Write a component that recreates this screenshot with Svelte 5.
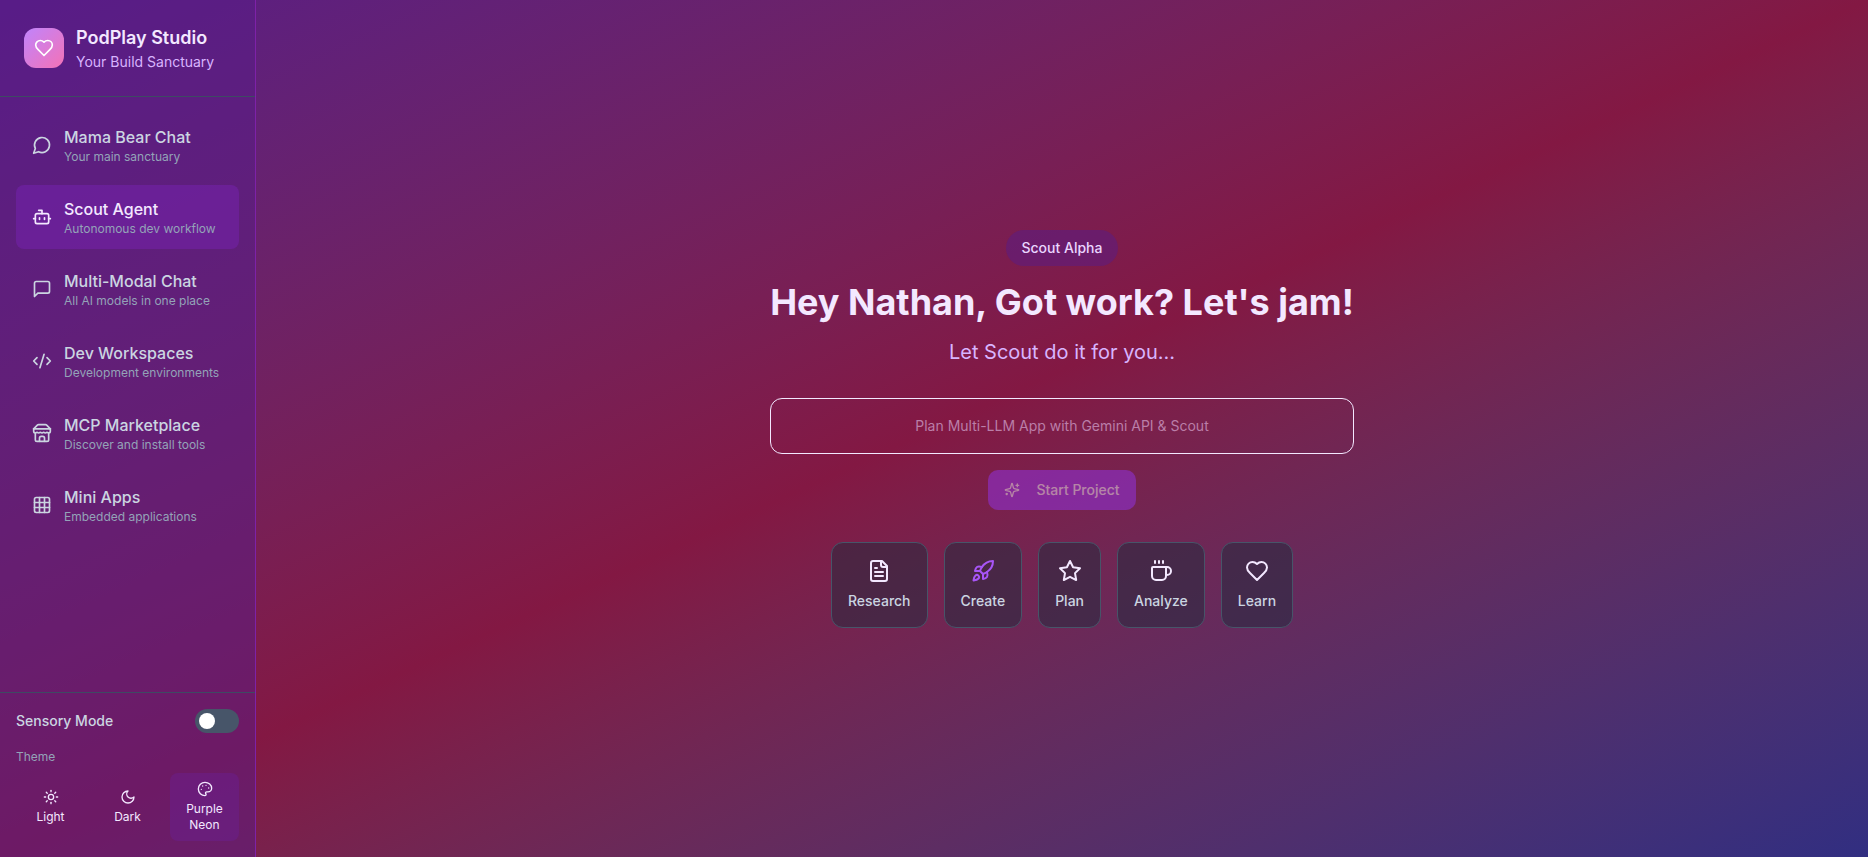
<script>
  const icons = {
    heart: ['M19 14c1.49-1.46 3-3.21 3-5.5A5.5 5.5 0 0 0 16.5 3c-1.76 0-3 .5-4.5 2-1.5-1.5-2.74-2-4.5-2A5.5 5.5 0 0 0 2 8.5c0 2.3 1.5 4.05 3 5.5l7 7Z'],
    chat: ['M7.9 20A9 9 0 1 0 4 16.1L2 22Z'],
    bot: ['M12 8V4H8', 'M6 8h12a2 2 0 0 1 2 2v8a2 2 0 0 1-2 2H6a2 2 0 0 1-2-2v-8a2 2 0 0 1 2-2z', 'M2 14h2', 'M20 14h2', 'M15 13v2', 'M9 13v2'],
    square: ['M21 15a2 2 0 0 1-2 2H7l-4 4V5a2 2 0 0 1 2-2h14a2 2 0 0 1 2 2z'],
    code: ['m18 16 4-4-4-4', 'm6 8-4 4 4 4', 'm14.5 4-5 16'],
    store: [
      'm2 7 4.41-4.41A2 2 0 0 1 7.83 2h8.34a2 2 0 0 1 1.42.59L22 7',
      'M4 12v8a2 2 0 0 0 2 2h12a2 2 0 0 0 2-2v-8',
      'M15 22v-4a2 2 0 0 0-2-2h-2a2 2 0 0 0-2 2v4',
      'M2 7h20',
      'M22 7v3a2 2 0 0 1-2 2a2.7 2.7 0 0 1-1.59-.63.7.7 0 0 0-.82 0A2.7 2.7 0 0 1 16 12a2.7 2.7 0 0 1-1.59-.63.7.7 0 0 0-.82 0A2.7 2.7 0 0 1 12 12a2.7 2.7 0 0 1-1.59-.63.7.7 0 0 0-.82 0A2.7 2.7 0 0 1 8 12a2.7 2.7 0 0 1-1.59-.63.7.7 0 0 0-.82 0A2.7 2.7 0 0 1 4 12a2 2 0 0 1-2-2V7'
    ],
    grid: ['M5 3h14a2 2 0 0 1 2 2v14a2 2 0 0 1-2 2H5a2 2 0 0 1-2-2V5a2 2 0 0 1 2-2z', 'M3 9h18', 'M3 15h18', 'M9 3v18', 'M15 3v18'],
    sun: ['M8 12a4 4 0 1 0 8 0a4 4 0 1 0-8 0z', 'M12 2v2', 'M12 20v2', 'm4.93 4.93 1.41 1.41', 'm17.66 17.66 1.41 1.41', 'M2 12h2', 'M20 12h2', 'm6.34 17.66-1.41 1.41', 'm19.07 4.93-1.41 1.41'],
    moon: ['M12 3a6 6 0 0 0 9 9 9 9 0 1 1-9-9Z'],
    palette: [
      'M13.5 6.5h.01', 'M17.5 10.5h.01', 'M8.5 7.5h.01', 'M6.5 12.5h.01',
      'M12 2C6.5 2 2 6.5 2 12s4.5 10 10 10c.926 0 1.648-.746 1.648-1.688 0-.437-.18-.835-.437-1.125-.29-.289-.438-.652-.438-1.125a1.64 1.64 0 0 1 1.668-1.668h1.996c3.051 0 5.555-2.503 5.555-5.554C21.965 6.012 17.461 2 12 2z'
    ],
    sparkles: [
      'M9.937 15.5A2 2 0 0 0 8.5 14.063l-6.135-1.582a.5.5 0 0 1 0-.962L8.5 9.936A2 2 0 0 0 9.937 8.5l1.582-6.135a.5.5 0 0 1 .963 0L14.063 8.5A2 2 0 0 0 15.5 9.937l6.135 1.581a.5.5 0 0 1 0 .964L15.5 14.063a2 2 0 0 0-1.437 1.437l-1.582 6.135a.5.5 0 0 1-.963 0z',
      'M20 3v4', 'M22 5h-4', 'M4 17v2', 'M5 18H3'
    ],
    file: ['M15 2H6a2 2 0 0 0-2 2v16a2 2 0 0 0 2 2h12a2 2 0 0 0 2-2V7Z', 'M14 2v4a2 2 0 0 0 2 2h4', 'M10 9H8', 'M16 13H8', 'M16 17H8'],
    rocket: [
      'M4.5 16.5c-1.5 1.26-2 5-2 5s3.74-.5 5-2c.71-.84.7-2.13-.09-2.91a2.18 2.18 0 0 0-2.91-.09z',
      'm12 15-3-3a22 22 0 0 1 2-3.95A12.88 12.88 0 0 1 22 2c0 2.72-.78 7.5-6 11a22.35 22.35 0 0 1-4 2z',
      'M9 12H4s.55-3.03 2-4c1.62-1.08 5 0 5 0',
      'M12 15v5s3.03-.55 4-2c1.08-1.62 0-5 0-5'
    ],
    star: ['M12 2 15.09 8.26 22 9.27 17 14.14 18.18 21.02 12 17.77 5.82 21.02 7 14.14 2 9.27 8.91 8.26 12 2z'],
    coffee: ['M10 2v2', 'M14 2v2', 'M16 8a1 1 0 0 1 1 1v8a4 4 0 0 1-4 4H7a4 4 0 0 1-4-4V9a1 1 0 0 1 1-1h14a4 4 0 1 1 0 8h-1', 'M6 2v2']
  };

  const navItems = [
    { icon: 'chat', title: 'Mama Bear Chat', sub: 'Your main sanctuary' },
    { icon: 'bot', title: 'Scout Agent', sub: 'Autonomous dev workflow', active: true },
    { icon: 'square', title: 'Multi-Modal Chat', sub: 'All AI models in one place' },
    { icon: 'code', title: 'Dev Workspaces', sub: 'Development environments' },
    { icon: 'store', title: 'MCP Marketplace', sub: 'Discover and install tools' },
    { icon: 'grid', title: 'Mini Apps', sub: 'Embedded applications' }
  ];

  const themes = [
    { icon: 'sun', label: 'Light' },
    { icon: 'moon', label: 'Dark' },
    { icon: 'palette', label: 'Purple Neon', active: true }
  ];

  const actions = [
    { icon: 'file', label: 'Research' },
    { icon: 'rocket', label: 'Create', accent: true },
    { icon: 'star', label: 'Plan' },
    { icon: 'coffee', label: 'Analyze' },
    { icon: 'heart', label: 'Learn' }
  ];

  let prompt = '';
  let sensory = false;
</script>

{#snippet icon(name, size)}
  <svg width={size} height={size} viewBox="0 0 24 24" fill="none" stroke="currentColor" stroke-width="2" stroke-linecap="round" stroke-linejoin="round">
    {#each icons[name] as d}
      <path {d} />
    {/each}
  </svg>
{/snippet}

<div class="app">
  <aside class="sidebar">
    <header class="brand">
      <div class="logo">{@render icon('heart', 20)}</div>
      <div>
        <div class="brand-name">PodPlay Studio</div>
        <div class="brand-tag">Your Build Sanctuary</div>
      </div>
    </header>

    <nav class="nav">
      {#each navItems as item}
        <button class="nav-item" class:active={item.active}>
          <span class="nav-icon">{@render icon(item.icon, 20)}</span>
          <span class="nav-text">
            <span class="nav-title">{item.title}</span>
            <span class="nav-sub">{item.sub}</span>
          </span>
        </button>
      {/each}
    </nav>

    <footer class="settings">
      <div class="sensory">
        <span>Sensory Mode</span>
        <button class="toggle" class:on={sensory} aria-label="Sensory Mode" on:click={() => (sensory = !sensory)}>
          <span class="knob"></span>
        </button>
      </div>
      <div class="theme-label">Theme</div>
      <div class="themes">
        {#each themes as t}
          <button class="theme" class:active={t.active}>
            {@render icon(t.icon, 16)}
            <span>{t.label}</span>
          </button>
        {/each}
      </div>
    </footer>
  </aside>

  <main class="main">
    <div class="hero">
      <div class="badge">Scout Alpha</div>
      <h1>Hey Nathan, Got work? Let's jam!</h1>
      <p class="lead">Let Scout do it for you...</p>
      <input class="prompt" type="text" placeholder="Plan Multi-LLM App with Gemini API & Scout" bind:value={prompt} />
      <button class="start" disabled={!prompt}>
        {@render icon('sparkles', 16)}
        <span>Start Project</span>
      </button>
      <div class="actions">
        {#each actions as a}
          <button class="action" class:accent={a.accent}>
            <span class="action-icon">{@render icon(a.icon, 24)}</span>
            <span>{a.label}</span>
          </button>
        {/each}
      </div>
    </div>
  </main>
</div>

<style>
  :global(body) {
    font-family: Inter, "Liberation Sans", sans-serif;
  }

  button {
    font: inherit;
    border: none;
    background: none;
    cursor: pointer;
    color: inherit;
  }

  svg {
    display: block;
  }

  .app {
    display: flex;
    height: 857px;
    overflow: hidden;
    background: linear-gradient(to bottom right in oklab, #581c87, #831843, #312e81);
  }

  .sidebar {
    width: 256px;
    box-sizing: border-box;
    flex-shrink: 0;
    display: flex;
    flex-direction: column;
    background: rgba(88, 28, 135, 0.5);
    border-right: 1px solid #7e22a8;
  }

  .brand {
    display: flex;
    align-items: center;
    gap: 12px;
    height: 97px;
    box-sizing: border-box;
    padding: 0 24px;
    border-bottom: 1px solid #3e4a63;
  }

  .logo {
    width: 40px;
    height: 40px;
    border-radius: 12px;
    display: flex;
    align-items: center;
    justify-content: center;
    color: #fff;
    background: linear-gradient(to bottom right, #c084fc, #f472b6);
  }

  .brand-name {
    font-size: 18px;
    line-height: 28px;
    font-weight: 600;
    color: #f3e8ff;
  }

  .brand-tag {
    font-size: 14px;
    line-height: 20px;
    color: #d8b4fe;
  }

  .nav {
    flex: 1;
    display: flex;
    flex-direction: column;
    gap: 8px;
    padding: 16px;
  }

  .nav-item {
    display: flex;
    align-items: center;
    gap: 12px;
    height: 64px;
    padding: 0 16px;
    border-radius: 8px;
    text-align: left;
  }

  .nav-item.active {
    background: rgba(126, 34, 190, 0.4);
  }

  .nav-icon {
    color: #cbd5e1;
  }

  .nav-item.active .nav-icon {
    color: #f3e8ff;
  }

  .nav-text {
    display: flex;
    flex-direction: column;
  }

  .nav-title {
    font-size: 16px;
    line-height: 24px;
    font-weight: 500;
    color: #cbd5e1;
  }

  .nav-item.active .nav-title {
    color: #f3e8ff;
  }

  .nav-sub {
    font-size: 12px;
    line-height: 16px;
    color: #94a3b8;
  }

  .settings {
    padding: 16px;
    border-top: 1px solid #3e4a63;
  }

  .sensory {
    display: flex;
    align-items: center;
    justify-content: space-between;
    font-size: 14px;
    line-height: 20px;
    font-weight: 500;
    color: #cbd5e1;
    margin-bottom: 16px;
  }

  .sensory span:first-child {
    margin-bottom: 1px;
  }

  .toggle {
    width: 44px;
    height: 24px;
    padding: 0;
    border-radius: 12px;
    background: #475569;
    position: relative;
  }

  .knob {
    position: absolute;
    top: 4px;
    left: 4px;
    width: 16px;
    height: 16px;
    border-radius: 50%;
    background: #fff;
  }

  .toggle.on .knob {
    left: 24px;
  }

  .theme-label {
    font-size: 12px;
    line-height: 16px;
    color: #94a3b8;
    margin-bottom: 8px;
  }

  .themes {
    display: grid;
    grid-template-columns: repeat(3, 1fr);
    gap: 8px;
  }

  .theme {
    display: flex;
    flex-direction: column;
    align-items: center;
    justify-content: center;
    gap: 4px;
    padding: 8px;
    border-radius: 8px;
    font-size: 12px;
    line-height: 16px;
    color: #f3e8ff;
  }

  .theme.active {
    background: rgba(107, 33, 168, 0.3);
  }

  .main {
    flex: 1;
    display: flex;
    align-items: center;
    justify-content: center;
  }

  .hero {
    width: 584px;
    display: flex;
    flex-direction: column;
    align-items: center;
  }

  .badge {
    padding: 8px 16px;
    border-radius: 18px;
    font-size: 14px;
    line-height: 20px;
    font-weight: 500;
    color: #e9d5ff;
    background: rgba(88, 28, 135, 0.5);
    margin-bottom: 16px;
  }

  h1 {
    margin: 0 0 16px;
    font-size: 36px;
    line-height: 40px;
    font-weight: 700;
    color: #f3e8ff;
    white-space: nowrap;
  }

  .lead {
    margin: 0 0 32px;
    font-size: 20px;
    line-height: 28px;
    color: #d8b4fe;
  }

  .prompt {
    width: 100%;
    height: 56px;
    box-sizing: border-box;
    padding: 0 16px;
    margin-bottom: 16px;
    border: 1px solid #f3e8ff;
    border-radius: 12px;
    background: transparent;
    font: inherit;
    font-size: 14px;
    color: #f3e8ff;
    text-align: center;
    outline: none;
  }

  .prompt::placeholder {
    color: #ba7ea8;
    opacity: 1;
  }

  .start {
    display: flex;
    align-items: center;
    gap: 16px;
    height: 40px;
    padding: 0 16px;
    border-radius: 10px;
    font-size: 14px;
    font-weight: 500;
    color: #f3e8ff;
    background: #9333ea;
    opacity: 0.5;
    margin-bottom: 32px;
  }

  .actions {
    display: flex;
    gap: 16px;
  }

  .action {
    display: flex;
    flex-direction: column;
    align-items: center;
    gap: 8px;
    padding: 16px;
    border: 1px solid #475569;
    border-radius: 12px;
    background: rgba(30, 41, 59, 0.5);
    font-size: 14px;
    line-height: 20px;
    font-weight: 500;
    color: #cbd5e1;
  }

  .action-icon {
    color: #f3e8ff;
  }

  .action.accent .action-icon {
    color: #a855f7;
  }
</style>
